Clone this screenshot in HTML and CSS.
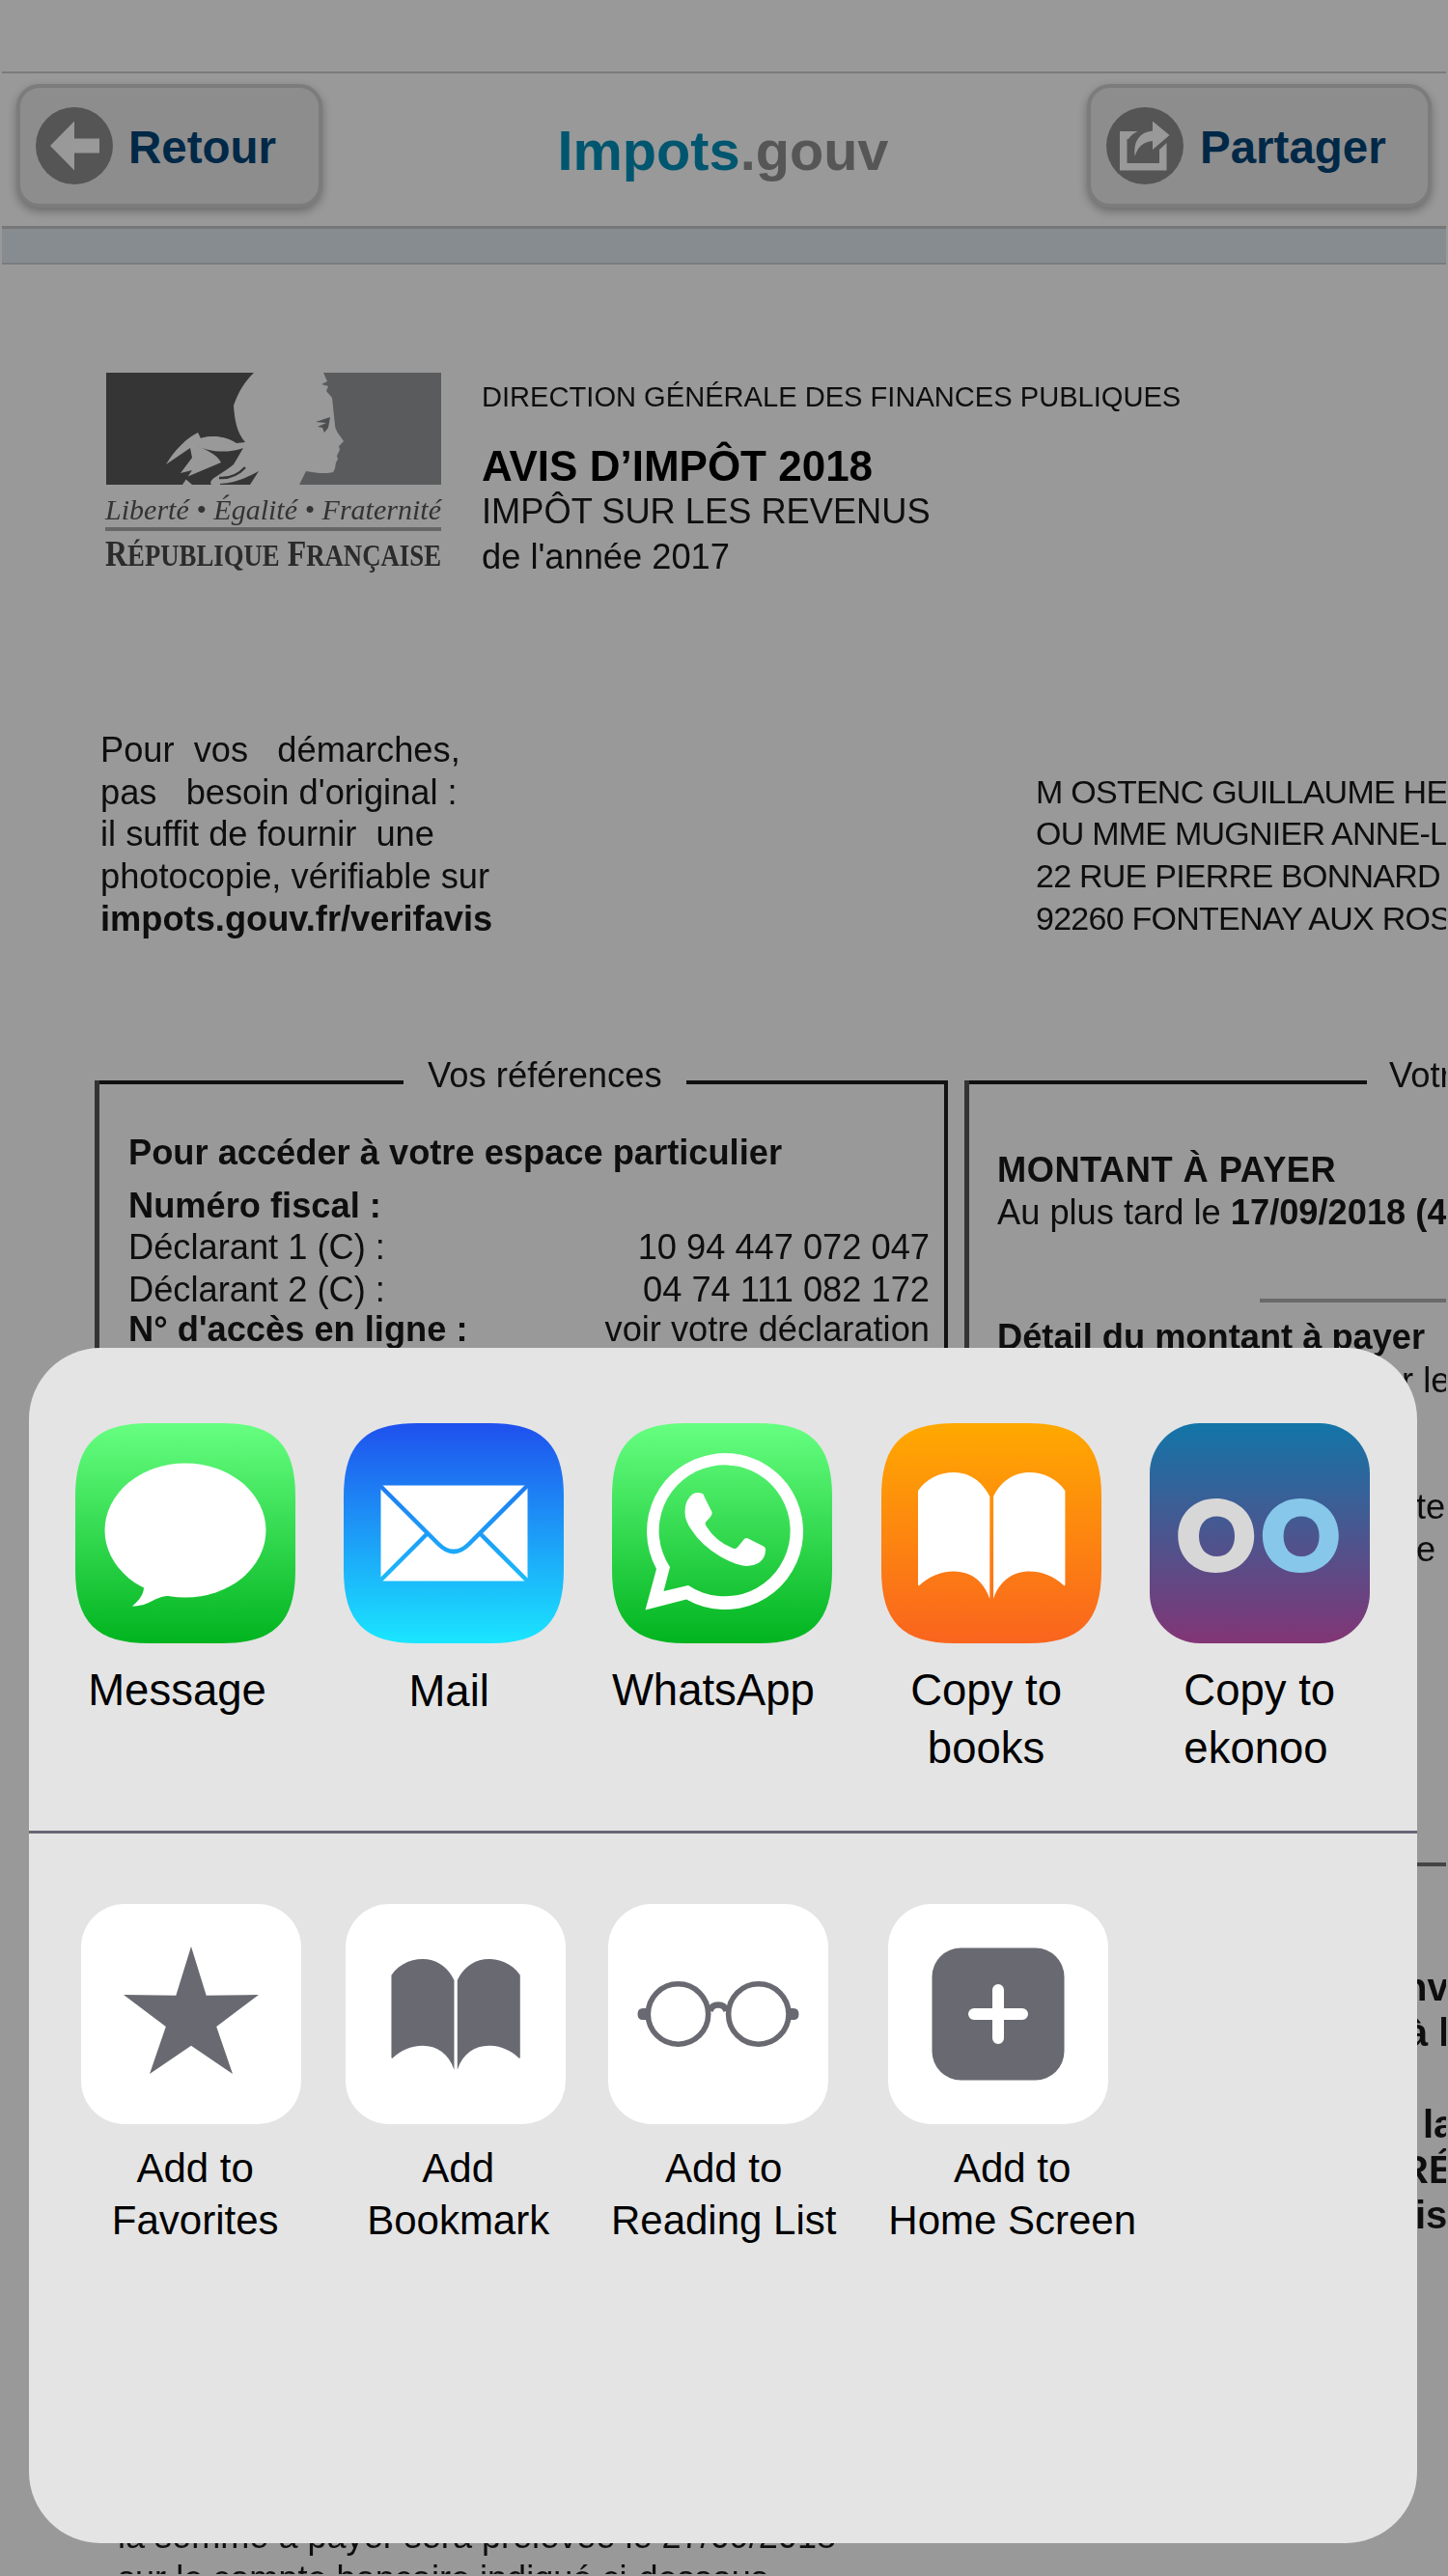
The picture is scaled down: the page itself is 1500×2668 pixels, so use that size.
FILE: index.html
```html
<!DOCTYPE html>
<html lang="fr">
<head>
<meta charset="utf-8">
<title>Impots.gouv</title>
<link rel="stylesheet" href="styles.css">
</head>
<body>
<main class="screen">
  <div class="status"></div>
  <header class="bar">
    <div class="button">
      <svg class="button-icon" viewBox="0 0 80 80"><circle cx="40" cy="40" r="40" fill="#555"/><path d="M15 40 40 14.500V32.500H66V47.500H40V65.500Z" fill="#999"/></svg>
      <span>Retour</span>
    </div>
    <h1 class="title"><span class="brand">Impots</span>.gouv</h1>
    <div class="button share">
      <svg class="button-icon" viewBox="0 0 80 80"><circle cx="40" cy="40" r="40" fill="#555"/><path d="M14 25H32.500Q26 28 23 33H21.500V58H55V44L62.500 37V65.500H14Z" fill="#999"/><path d="M48 14.500 65.500 29 48 44V35Q34 36 29.500 51Q27 27 48 24.500Z" fill="#999"/></svg>
      <span>Partager</span>
    </div>
  </header>
  <div class="band"></div>

  <article class="doc">
    <section class="head">
      <svg class="logo" viewBox="0 0 352 210">
        <path d="M3 0H156C146 10 140 20 135 34C136 48 138 62 147 72L138 73C128 66 112 64 101 68L98 62C86 68 74 80 65 95L90 78L92 88L80 104L92 101L84 113L82 116H3Z" fill="#353536"/>
        <path d="M97 76C110 82 128 84 145 78L135 95C122 106 108 110 112 116H92L84 109L122 93C117 84 107 80 97 76Z" fill="#353536"/>
        <path d="M101 68C112 64 128 67 137 73C125 74 111 73 101 68Z" fill="#999"/>
        <path d="M120 109Q136 110 147 98" fill="none" stroke="#353536" stroke-width="2.500"/>
        <path d="M121 115Q140 114 161 102L152 116H121Z" fill="#353536"/>
        <path d="M228 0H350V116H203L210 102C220 104 232 105 238 103C242 98 239 94 243 90L242 86L245 80L244 76L249 71C246 66 240 60 240 54L237 26L231 19L233 14L226 12L232 9Z" fill="#5a5b5d"/>
        <path d="M220 51L235 46L233 57L229 62L227 57L222 56L231 52Z" fill="#4d4e50"/>
        <text x="2" y="151.500" class="motto" textLength="348" lengthAdjust="spacingAndGlyphs">Liberté • Égalité • Fraternité</text>
        <path d="M2 162H350" stroke="#666" stroke-width="4"/>
        <text x="2" y="199.500" class="republic" textLength="348" lengthAdjust="spacingAndGlyphs">R<tspan class="sc">ÉPUBLIQUE</tspan> F<tspan class="sc">RANÇAISE</tspan></text>
      </svg>
      <div class="heading">
        <p class="dept">DIRECTION GÉNÉRALE DES FINANCES PUBLIQUES</p>
        <h2>AVIS D’IMPÔT 2018</h2>
        <p>IMPÔT SUR LES REVENUS</p>
        <p class="year">de l'année 2017</p>
      </div>
    </section>

    <section class="intro">
      <div class="steps">
        <p>Pour  vos   démarches,</p>
        <p>pas   besoin d'original :</p>
        <p>il suffit de fournir  une</p>
        <p>photocopie, vérifiable sur</p>
        <p><b>impots.gouv.fr/verifavis</b></p>
      </div>
      <address>
        <p>M OSTENC GUILLAUME HE</p>
        <p>OU MME MUGNIER ANNE-L</p>
        <p>22 RUE PIERRE BONNARD</p>
        <p>92260 FONTENAY AUX ROS</p>
      </address>
    </section>

    <section class="boxes">
      <div class="box refs">
        <h3 class="legend"><span>Vos références</span></h3>
        <div class="box-body">
          <p class="access"><b>Pour accéder à votre espace particulier</b></p>
          <p><b>Numéro fiscal :</b></p>
          <p class="pair"><span>Déclarant 1 (C) :</span><span>10 94 447 072 047</span></p>
          <p class="pair"><span>Déclarant 2 (C) :</span><span>04 74 111 082 172</span></p>
          <p class="pair online"><b>N° d'accès en ligne :</b><span>voir votre déclaration</span></p>
        </div>
      </div>
      <div class="box amount">
        <h3 class="legend"><span>Votr</span></h3>
        <div class="box-body">
          <p class="due"><b>MONTANT À PAYER</b></p>
          <p>Au plus tard le <b>17/09/2018 (4</b></p>
          <div class="rule"></div>
          <p><b>Détail du montant à payer</b></p>
          <p class="tail tail-a">r le</p>
          <p class="tail tail-b">te</p>
          <p class="tail tail-c">e</p>
        </div>
      </div>
    </section>

    <section class="notes">
      <p class="note-a">nv</p>
      <p class="note-b">à l</p>
      <p class="note-c">la</p>
      <p class="note-d">RÉ</p>
      <p class="note-e">is</p>
    </section>
    <section class="debit">
      <p>la somme à payer sera prélevée le 27/09/2018</p>
      <p>sur le compte bancaire indiqué ci-dessous</p>
    </section>
  </article>

  <aside class="sheet">
    <div class="row apps">
      <div class="item">
        <svg class="icon" viewBox="0 0 228 228">
          <defs><linearGradient id="green" x1="0" y1="0" x2="0" y2="1"><stop offset="0" stop-color="#67ff81"/><stop offset="1" stop-color="#01b41f"/></linearGradient>
          <path id="tile" d="M0 76C0 22 22 0 76 0H152C206 0 228 22 228 76V152C228 206 206 228 152 228H76C22 228 0 206 0 152Z"/></defs>
          <use href="#tile" fill="url(#green)"/>
          <ellipse cx="114" cy="111" rx="83.500" ry="69.500" fill="#fff"/>
          <path d="M59 189.500C66 184 71 177 71 170L99 179C82 178 79 189.500 59 189.500Z" fill="#fff"/>
        </svg>
        <span class="label shift-a">Message</span>
      </div>
      <div class="item">
        <svg class="icon" viewBox="0 0 228 228">
          <defs><linearGradient id="blue" x1="0" y1="0" x2="0" y2="1"><stop offset="0" stop-color="#1f50ee"/><stop offset="1" stop-color="#1ae6ff"/></linearGradient>
          <mask id="folds"><rect width="228" height="228" fill="#fff"/><path d="M35 62 98 125Q114 141 130 125L193 62M35 166 87 114M193 166 141 114" fill="none" stroke="#000" stroke-width="4.500"/></mask></defs>
          <use href="#tile" fill="url(#blue)"/>
          <rect x="38.500" y="64.500" width="152" height="99" fill="#fff" mask="url(#folds)"/>
        </svg>
        <span class="label shift-b">Mail</span>
      </div>
      <div class="item">
        <svg class="icon" viewBox="0 0 228 228">
          <use href="#tile" fill="url(#green)"/>
          <path fill="#fff" fill-rule="evenodd" d="M34.500 193.500 46 151A81 81 0 1 1 77 182.500ZM53.500 174 79 168A68 68 0 1 0 60 149Z"/>
          <path fill="#fff" d="M84 73Q89 71 94 73 95 74 96 77L103.500 92Q104 94 102 97L97 102.500Q96 104 97.500 106.500 107 122 124 129 128 131 130 128.500L137 120Q138.500 118.500 141 119.500L157 127.500Q159.500 129 159 132 158 147 139 148 130 148 112 138 92 126 82 110 75.500 101 75.500 92 75.500 79 84 73Z"/>
        </svg>
        <span class="label shift-c">WhatsApp</span>
      </div>
      <div class="item">
        <svg class="icon" viewBox="0 0 228 228">
          <defs><linearGradient id="orange" x1="0" y1="0" x2="0" y2="1"><stop offset="0" stop-color="#ffa900"/><stop offset="1" stop-color="#fa641e"/></linearGradient>
          <g id="book"><path id="leaf" d="M38 70C46 58 60 51 75 51C92 51 105 61 112.300 76V182C106 163 92 153.500 75 153.500C61 153.500 49 159 39.500 168Q38 169 38 167Z"/><use href="#leaf" transform="matrix(-1 0 0 1 228.400 0)"/></g></defs>
          <use href="#tile" fill="url(#orange)"/>
          <use href="#book" fill="#fff"/>
        </svg>
        <span class="label shift-d">Copy to<br>books</span>
      </div>
      <div class="item">
        <svg class="icon" viewBox="0 0 228 228">
          <defs><linearGradient id="dusk" x1="0" y1="0" x2="0" y2="1"><stop offset="0" stop-color="#1275a8"/><stop offset=".5" stop-color="#4a568f"/><stop offset="1" stop-color="#823575"/></linearGradient>
          <path id="ring" fill-rule="evenodd" d="M29.300 116.500C29.300 94 46 78 68.700 78C91.500 78 108.200 94 108.200 116.500C108.200 139 91.500 155 68.700 155C46 155 29.300 139 29.300 116.500ZM51 117C51 130 58.500 138 69.500 138C80.500 138 88 130 88 117C88 104 80.500 96.500 69.500 96.500C58.500 96.500 51 104 51 117Z"/></defs>
          <rect width="228" height="228" rx="52" fill="url(#dusk)"/>
          <use href="#ring" fill="#d7d7d7"/>
          <use href="#ring" x="87.600" fill="#86c7ea"/>
        </svg>
        <span class="label left">Copy to<br>ekonoo</span>
      </div>
    </div>
    <div class="row actions">
      <div class="item favorites">
        <div class="icon white"><svg viewBox="0 0 228 228"><path d="M114 44 129.700 94.700 184 94 140.200 127 157 176 114 146.700 71 176 87.800 127 44 94 98.300 94.700Z"/></svg></div>
        <span class="label">Add to<br>Favorites</span>
      </div>
      <div class="item bookmark">
        <div class="icon white"><svg viewBox="0 0 228 228"><use href="#book" transform="translate(14.200 12.400) scale(.875)"/></svg></div>
        <span class="label">Add<br>Bookmark</span>
      </div>
      <div class="item reading">
        <div class="icon white"><svg viewBox="0 0 228 228"><g fill="none" stroke="#696971" stroke-width="5.600"><circle cx="72.500" cy="114" r="31.200"/><circle cx="155.800" cy="114" r="31.200"/><path d="M105.500 111Q107 104.500 114 104.500T122.500 111" stroke-width="6.500"/></g><path d="M40 108H36Q30.500 108 30.500 114T36 120H40ZM188 108H192Q197.500 108 197.500 114T192 120H188Z"/></svg></div>
        <span class="label">Add to<br>Reading List</span>
      </div>
      <div class="item home">
        <div class="icon white"><svg viewBox="0 0 228 228"><rect x="45.500" y="45.500" width="137" height="137" rx="30"/><path d="M114 89V139M89 114H139" stroke="#fff" stroke-width="12" stroke-linecap="round"/></svg></div>
        <span class="label">Add to<br>Home Screen</span>
      </div>
    </div>
  </aside>
</main>
</body>
</html>
```
FILE: styles.css
```css
* { box-sizing: border-box; }
body { margin: 0; background: #999; font-family: "Liberation Sans", Arial, sans-serif; }
h1, h2, h3, p { margin: 0; }
svg { display: block; }

.screen { position: relative; width: 1500px; height: 2668px; overflow: hidden; background: #999; }
.status { height: 76px; margin: 0 2px; border-bottom: 2px solid #7b7b7b; }

/* Navigation bar */
.bar { display: flex; justify-content: space-between; align-items: flex-start; height: 158px; margin: 0 2px; padding: 11px 15px 0; }
.button { display: flex; align-items: center; gap: 16px; width: 317px; height: 128px; padding: 0 10px 0 16px; border: 4px solid #7c7c7c; border-radius: 24px; background: #8d8d8d; color: #002847; font-size: 47.5px; font-weight: bold; box-shadow: 0 4px 10px rgba(0, 0, 0, .3); }
.button span { padding-top: 3px; }
.button.share { width: 357px; gap: 17px; }
.button-icon { width: 80px; height: 80px; flex: none; }
.title { margin-left: 38px; padding-top: 35px; color: #565656; font-size: 57.700px; line-height: 68px; }
.brand { color: #00566f; }
.band { height: 40px; margin: 0 2px; border-top: 3px solid #777; border-bottom: 2px solid #797d80; background: #868c8f; }

/* Tax notice */
.doc { height: 2392px; margin: 0 2px; overflow: hidden; color: #0e0e0e; font-size: 36.25px; line-height: 43.7px; filter: blur(.7px); }
.doc p { white-space: pre; }
.head { display: flex; gap: 40px; padding: 112px 0 0 105px; height: 481px; }
.logo { width: 352px; height: 210px; flex: none; }
.motto { font: italic 29px "Liberation Serif", serif; fill: #333; }
.republic { font: bold 37px "Liberation Serif", serif; fill: #2b2b2b; }
.sc { font-size: 31px; }
.heading { padding-top: 5px; }
.heading .dept { font-size: 29.1px; line-height: 40px; }
.heading h2 { margin-top: 27px; font-size: 44px; line-height: 50px; color: #000; }
.heading p { line-height: 44px; }
.heading .year { margin-top: 3px; }
.intro { display: flex; height: 364px; padding-left: 102px; }
.steps { width: 969px; flex: none; }
.intro address { padding-top: 43.7px; font-size: 34px; letter-spacing: -.75px; font-style: normal; }

.boxes { display: flex; gap: 17px; height: 814px; padding-left: 96px; }
.box { flex: none; border-left: 5px solid #333; border-bottom: 4px solid #444; }
.refs { width: 884px; border-right: 4px solid #111; }
.amount { width: 1100px; }
.legend { display: flex; align-items: flex-start; gap: 25px; height: 44px; margin: -27.5px 0 0; font-size: 36.4px; font-weight: normal; white-space: nowrap; }
.legend::before, .legend::after { content: ""; height: 4px; margin-top: 27.5px; background: #111; }
.legend::before { width: 315px; }
.legend::after { flex: 1; }
.amount .legend::before { width: 412px; }
.amount .legend span { margin-left: -2px; }
.box-body { padding: 36px 15px 0 30px; }
.access { margin-bottom: 11.3px; }
.pair { display: flex; justify-content: space-between; }
.online { margin-top: -3px; }
.amount .box-body { padding-top: 54.5px; padding-left: 29px; }
.due { letter-spacing: .5px; }
.rule { width: 300px; height: 4px; margin: 68px 0 13.500px 272px; background: #6a6a6a; }
.tail-a { padding-left: 419px; margin-top: 1px; }
.tail-b { padding-left: 434px; margin-top: 88px; }
.tail-c { padding-left: 434px; }

.notes { height: 668px; padding-top: 102px; font-size: 40px; font-weight: bold; line-height: 47.300px; }
.note-a { padding-left: 1452px; }
.note-b { padding-left: 1455px; }
.note-c { padding-left: 1472px; margin-top: 47px; }
.note-d { padding-left: 1449px; }
.note-e { padding-left: 1464px; }
.debit { padding: 4px 0 0 120px; font-size: 36.100px; line-height: 44px; }

/* Share sheet */
.sheet { position: absolute; left: 30px; top: 1396px; width: 1438px; height: 1238px; border-radius: 74px; background: #e4e4e4; color: #000; }
.row { display: flex; }
.item { display: flex; flex-direction: column; align-items: center; width: 228px; flex: none; }
.icon { width: 228px; height: 228px; flex: none; }
.label { text-align: center; white-space: nowrap; }
.apps { gap: 50.200px; height: 503px; padding: 78px 0 0 48px; border-bottom: 3px solid #686777; }
.apps .label { margin-top: 19px; font-size: 45.500px; line-height: 60px; }
.apps .shift-a { margin-right: 17px; }
.apps .shift-b { margin-top: 20px; margin-right: 10px; }
.apps .shift-c { margin-right: 19px; }
.apps .shift-d { margin-right: 10px; }
.apps .left { text-align: left; }
.actions { padding: 73px 0 0 54.200px; }
.actions .label { margin-top: 19px; font-size: 42px; line-height: 54px; }
.white { border-radius: 45px; background: #fff; fill: #696971; }
.bookmark { margin-left: 46px; }
.reading { margin-left: 44px; }
.home { margin-left: 62px; }
.favorites .label { margin-left: 8px; }
.bookmark .label { margin-left: 5px; }
.reading .label { margin-left: 11px; }
.home .label { margin-left: 29px; }
```
